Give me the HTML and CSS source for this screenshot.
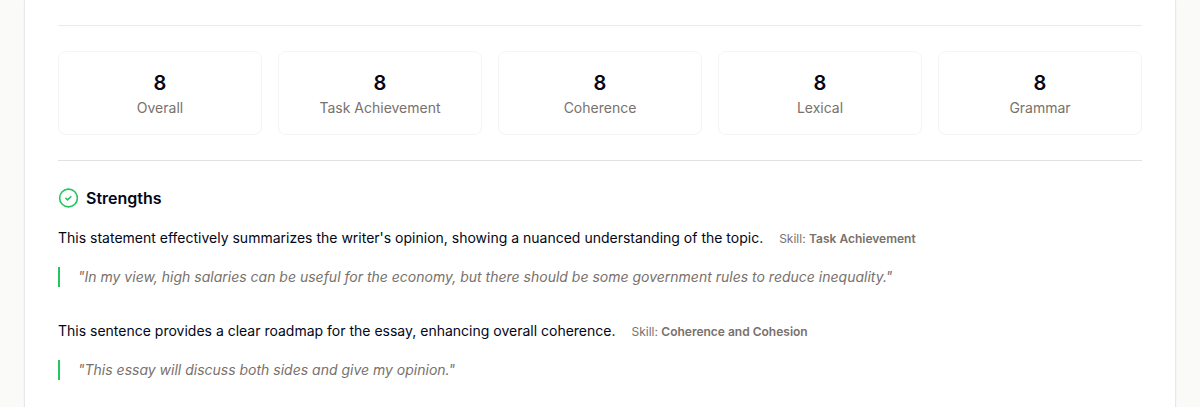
FILE: index.html
```
<!DOCTYPE html>
<html lang="en">
<head>
<meta charset="utf-8">
<title>Essay feedback</title>
<link rel="stylesheet" href="styles.css">
</head>
<body>
<main class="report">
  <section class="scores" aria-label="Scores">
    <div class="score"><strong class="score-value">8</strong><span class="score-label">Overall</span></div>
    <div class="score"><strong class="score-value">8</strong><span class="score-label">Task Achievement</span></div>
    <div class="score"><strong class="score-value">8</strong><span class="score-label">Coherence</span></div>
    <div class="score"><strong class="score-value">8</strong><span class="score-label">Lexical</span></div>
    <div class="score"><strong class="score-value">8</strong><span class="score-label">Grammar</span></div>
  </section>
  <section class="strengths">
    <h2 class="heading">
      <svg class="heading-icon" viewBox="0 0 20 20" aria-hidden="true"><circle cx="10.5" cy="10" r="8.9"/><path d="M7.9 10.3l1.7 1.6 3.2-3.2"/></svg>
      Strengths
    </h2>
    <article class="item">
      <p class="comment">This statement effectively summarizes the writer's opinion, showing a nuanced understanding of the topic.<span class="skill">Skill: <b>Task Achievement</b></span></p>
      <blockquote class="quote">"In my view, high salaries can be useful for the economy, but there should be some government rules to reduce inequality."</blockquote>
    </article>
    <article class="item">
      <p class="comment">This sentence provides a clear roadmap for the essay, enhancing overall coherence.<span class="skill">Skill: <b>Coherence and Cohesion</b></span></p>
      <blockquote class="quote">"This essay will discuss both sides and give my opinion."</blockquote>
    </article>
  </section>
</main>
</body>
</html>
```
FILE: styles.css
```
* { box-sizing: border-box; }

body {
  margin: 0;
  background: #fafaf9;
  color: #020617;
  font-family: Inter, "Liberation Sans", sans-serif;
  font-size: 14px;
  line-height: 20px;
}

.report {
  margin: 0 24px;
  padding: 25px 33px 0;
  min-height: 100vh;
  background: #fff;
  border: solid #e7e8ec;
  border-width: 0 1px;
  box-shadow: 0 1px 2px rgb(0 0 0 / 5%);
}

.scores {
  display: grid;
  grid-template-columns: repeat(5, 1fr);
  gap: 16px;
  padding: 25px 0;
  border-top: 1px solid #e9ebf0;
  border-bottom: 1px solid #dfe2e3;
}

.score {
  display: flex;
  flex-direction: column;
  align-items: center;
  padding: 17px 16px 15px;
  border: 1px solid #f5f5f5;
  border-radius: 8px;
}

.score-value { font-size: 20px; line-height: 28px; font-weight: 600; }
.score-label { color: #78716c; line-height: 22px; }

.heading {
  display: flex;
  align-items: center;
  gap: 8px;
  margin: 23px 0 14px;
  font-size: 16px;
  line-height: 28px;
  font-weight: 600;
}

.heading-icon {
  width: 20px;
  height: 20px;
  fill: none;
  stroke: #22c55e;
  stroke-width: 1.6;
  stroke-linecap: round;
  stroke-linejoin: round;
}

.item + .item { margin-top: 32px; }
.comment { margin: 0 0 16px; line-height: 24px; }
.skill { margin-left: 16px; font-size: 12px; color: #78716c; }
.skill b { font-weight: 600; }

.quote {
  margin: 0;
  padding-left: 18px;
  border-left: 2px solid #22c55e;
  color: #78716c;
  font-style: italic;
}
```
